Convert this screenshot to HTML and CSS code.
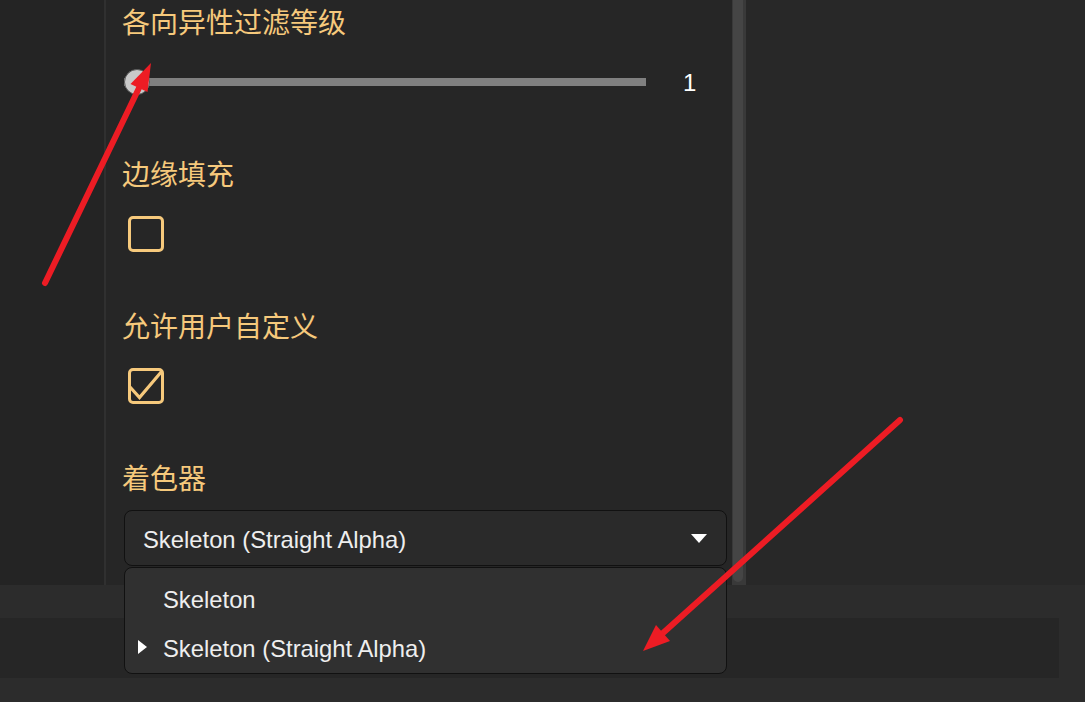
FILE: index.html
```html
<!DOCTYPE html>
<html lang="zh">
<head>
<meta charset="utf-8">
<link rel="stylesheet" href="styles.css">
</head>
<body>
<div class="main">
  <div class="left"></div>
  <div class="divider"></div>
  <div class="panel">
    <div class="field">
      <div class="label">各向异性过滤等级</div>
      <div class="control">
        <div class="slider">
          <div class="track"></div>
          <div class="knob"></div>
        </div>
        <div class="value">1</div>
      </div>
    </div>
    <div class="field">
      <div class="label">边缘填充</div>
      <div class="control">
        <svg class="checkbox" width="36" height="36" viewBox="0 0 36 36"><rect x="1.5" y="1.5" width="33" height="33" rx="3.5" fill="none" stroke="#f6c97c" stroke-width="3"/></svg>
      </div>
    </div>
    <div class="field">
      <div class="label">允许用户自定义</div>
      <div class="control">
        <svg class="checkbox" width="36" height="36" viewBox="0 0 36 36"><rect x="1.5" y="1.5" width="33" height="33" rx="3.5" fill="none" stroke="#f6c97c" stroke-width="3"/><path d="M2 19 L11.5 29.5 L34 3" fill="none" stroke="#f6c97c" stroke-width="3.2"/></svg>
      </div>
    </div>
    <div class="field">
      <div class="label">着色器</div>
      <div class="dropdown-wrap">
        <div class="dropdown">
          <span class="dd-text">Skeleton (Straight Alpha)</span>
          <span class="dd-arrow"></span>
        </div>
        <div class="popup">
          <div class="item"><span class="mark"></span>Skeleton</div>
          <div class="item"><span class="mark on"></span>Skeleton (Straight Alpha)</div>
        </div>
      </div>
    </div>
  </div>
  <div class="scroll"><div class="thumb"></div></div>
  <div class="right"></div>
</div>
<div class="band1"></div>
<div class="band2"></div>
<div class="band3"></div>
<svg class="annot" width="1085" height="702" viewBox="0 0 1085 702">
  <line x1="45" y1="283" x2="139" y2="88" stroke="#ed1c24" stroke-width="6" stroke-linecap="round"/>
  <polygon points="151,63 147.5,92 130.5,84" fill="#ed1c24"/>
  <line x1="900" y1="420" x2="663" y2="633" stroke="#ed1c24" stroke-width="6" stroke-linecap="round"/>
  <polygon points="643,651 656,625 670,641" fill="#ed1c24"/>
</svg>
</body>
</html>
```
FILE: styles.css
```css
* { box-sizing: border-box; }
html, body { margin: 0; padding: 0; }
body {
  width: 1085px;
  height: 702px;
  overflow: hidden;
  background: #2c2c2c;
  position: relative;
  font-family: "Liberation Sans", Arial, "Noto Sans CJK SC", sans-serif;
}
.main {
  display: flex;
  height: 585px;
}
.left { width: 104px; background: #242424; }
.divider { width: 2px; background: #303030; }
.panel {
  width: 626px;
  background: #262626;
  padding: 4px 0 0 16px;
}
.scroll {
  width: 14px;
  background: #393939;
  padding-left: 1px;
}
.thumb {
  width: 10px;
  height: 582px;
  background: #454545;
  border-radius: 0 0 5px 5px;
}
.right { flex: 1; background: #282828; }
.field { margin-bottom: 46px; }
.label {
  height: 34px;
  line-height: 34px;
  margin-bottom: 16px;
  font-family: "Noto Sans CJK SC", sans-serif;
  font-size: 28px;
  color: #f6c97c;
  white-space: nowrap;
}
.control {
  height: 56px;
  display: flex;
  align-items: center;
}
.slider {
  position: relative;
  width: 522px;
  height: 26px;
  margin-left: 2px;
  display: flex;
  align-items: center;
}
.track {
  width: 100%;
  height: 8px;
  background: #808080;
}
.knob {
  position: absolute;
  left: 0;
  top: 0;
  width: 26px;
  height: 26px;
  border-radius: 50%;
  background: #c9c9c9;
  border: 1px solid #5a5a5a;
}
.value {
  margin-left: 37px;
  padding-top: 2px;
  font-size: 24px;
  color: #ffffff;
}
.checkbox { margin-left: 6px; display: block; }
.dropdown-wrap {
  position: relative;
  margin-left: 2px;
  width: 603px;
}
.dropdown {
  height: 56px;
  background: #2a2a2a;
  border: 1px solid #111111;
  border-radius: 8px;
  display: flex;
  align-items: center;
  justify-content: space-between;
  padding: 0 19px 0 18px;
}
.dd-text {
  font-size: 23.8px;
  color: #eeeeee;
  padding-top: 4px;
}
.dd-arrow {
  width: 0;
  height: 0;
  border-left: 8px solid transparent;
  border-right: 8px solid transparent;
  border-top: 9px solid #ffffff;
}
.popup {
  position: absolute;
  left: 0;
  top: 57px;
  width: 603px;
  height: 107px;
  background: #303030;
  border: 1px solid #111111;
  border-radius: 8px;
  padding-top: 7px;
}
.item {
  height: 49px;
  display: flex;
  align-items: center;
  font-size: 23.8px;
  color: #eeeeee;
  padding-left: 13px;
}
.mark {
  width: 9px;
  height: 14px;
  margin-right: 16px;
}
.mark.on {
  border-top: 7px solid transparent;
  border-bottom: 7px solid transparent;
  border-left: 9px solid #ffffff;
  margin-top: -3px;
}
.band1 { height: 33px; background: #2c2c2c; }
.band2 { height: 60px; width: 1059px; background: #262626; }
.band3 { height: 24px; background: #2c2c2c; }
.annot {
  position: absolute;
  left: 0;
  top: 0;
  pointer-events: none;
}
```
